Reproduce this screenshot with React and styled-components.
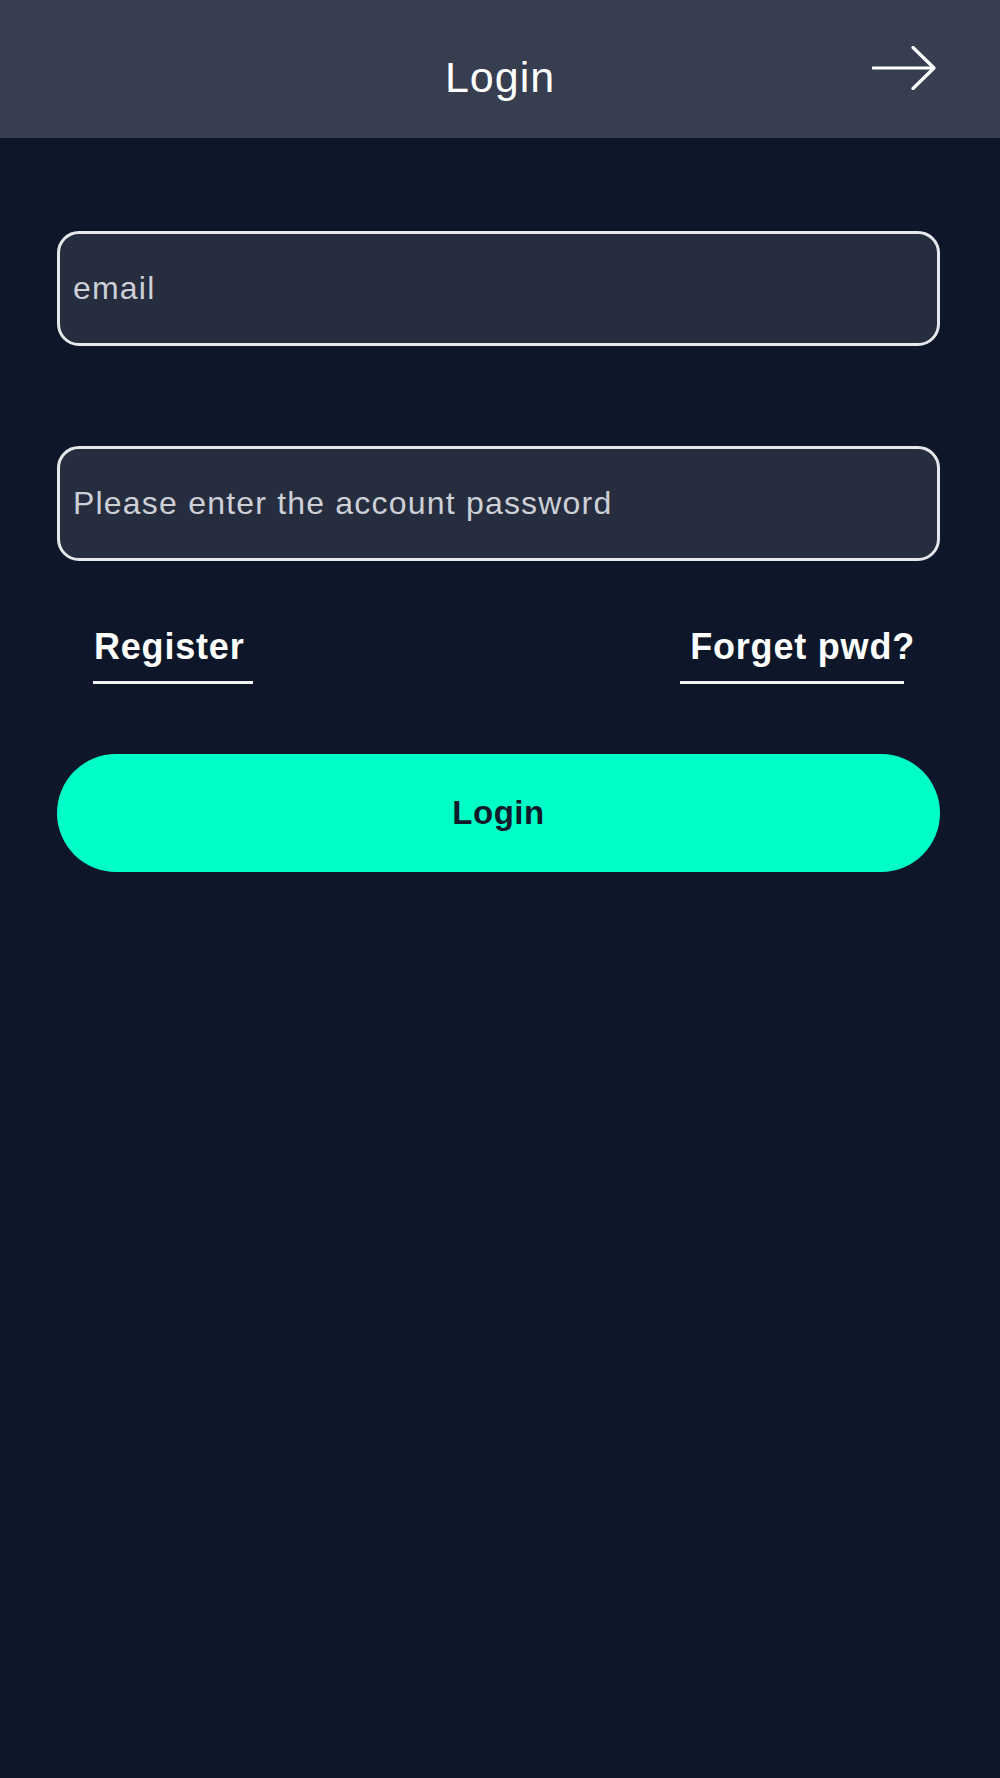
import React from "react";
import styled, { createGlobalStyle } from "styled-components";

const GlobalStyle = createGlobalStyle`
  html, body {
    margin: 0;
    padding: 0;
    background: #0d1729;
    font-family: "Liberation Sans", Arial, sans-serif;
  }
  * {
    box-sizing: border-box;
  }
`;

const Page = styled.div`
  min-height: 1778px;
  background: #0d1729;
  display: flex;
  flex-direction: column;
`;

const Header = styled.header`
  height: 138px;
  background: #363e50;
  display: grid;
  grid-template-columns: 1fr auto 1fr;
  align-items: start;
  padding-top: 46px;
`;

const Title = styled.h1`
  grid-column: 2;
  margin: 10px 0 0;
  font-size: 43px;
  line-height: 1;
  font-weight: 400;
  letter-spacing: 1px;
  color: #ffffff;
`;

const ArrowButton = styled.button`
  grid-column: 3;
  justify-self: end;
  margin-right: 64px;
  padding: 0;
  border: none;
  background: none;
  display: flex;
  cursor: pointer;
`;

const Form = styled.form`
  display: flex;
  flex-direction: column;
  padding: 93px 60px 0 57px;
`;

const Field = styled.input`
  height: 115px;
  width: 100%;
  margin-top: ${(p) => p.$gap || 0}px;
  padding: 0 13px;
  border: 3px solid #e6e7ea;
  border-radius: 22px;
  background: #252d3e;
  color: #e6e7ea;
  font-family: "Liberation Sans", Arial, sans-serif;
  font-size: 32px;
  letter-spacing: 1.2px;
  outline: none;

  &::placeholder {
    color: #cdd0d6;
  }
`;

const LinkRow = styled.div`
  display: flex;
  justify-content: space-between;
  margin-top: 68px;
  padding: 0 25px 0 36px;
`;

const TextLink = styled.a`
  display: flex;
  flex-direction: column;
  align-items: flex-start;
  text-decoration: none;
  color: #ffffff;
  cursor: pointer;
`;

const LinkLabel = styled.span`
  margin-left: ${(p) => p.$offset || 0}px;
  font-size: 36px;
  line-height: 1;
  font-weight: 700;
  letter-spacing: 0.8px;
  white-space: nowrap;
`;

const Underline = styled.span`
  display: block;
  width: ${(p) => p.$width}px;
  height: 3px;
  margin-top: 16px;
  background: #f2f3f5;
`;

const SubmitButton = styled.button`
  margin-top: 70px;
  height: 118px;
  width: 100%;
  border: none;
  border-radius: 59px;
  background: #00ffc6;
  color: #111a2b;
  font-family: "Liberation Sans", Arial, sans-serif;
  font-size: 33px;
  font-weight: 700;
  letter-spacing: 0.5px;
  cursor: pointer;
`;

function ArrowIcon() {
  return (
    <svg width="64" height="44" viewBox="0 0 64 44" fill="none">
      <path
        d="M1 22H62M41 1.5L62 22L41 42.5"
        stroke="#ffffff"
        strokeWidth="3.2"
        strokeLinecap="round"
        strokeLinejoin="round"
      />
    </svg>
  );
}

export default function App() {
  return (
    <>
      <GlobalStyle />
      <Page>
        <Header>
          <Title>Login</Title>
          <ArrowButton type="button" aria-label="next">
            <ArrowIcon />
          </ArrowButton>
        </Header>
        <Form onSubmit={(e) => e.preventDefault()}>
          <Field type="email" placeholder="email" />
          <Field
            type="password"
            placeholder="Please enter the account password"
            $gap={100}
          />
          <LinkRow>
            <TextLink>
              <LinkLabel $offset={1}>Register</LinkLabel>
              <Underline $width={160} />
            </TextLink>
            <TextLink>
              <LinkLabel $offset={10}>Forget pwd?</LinkLabel>
              <Underline $width={224} />
            </TextLink>
          </LinkRow>
          <SubmitButton type="submit">Login</SubmitButton>
        </Form>
      </Page>
    </>
  );
}
